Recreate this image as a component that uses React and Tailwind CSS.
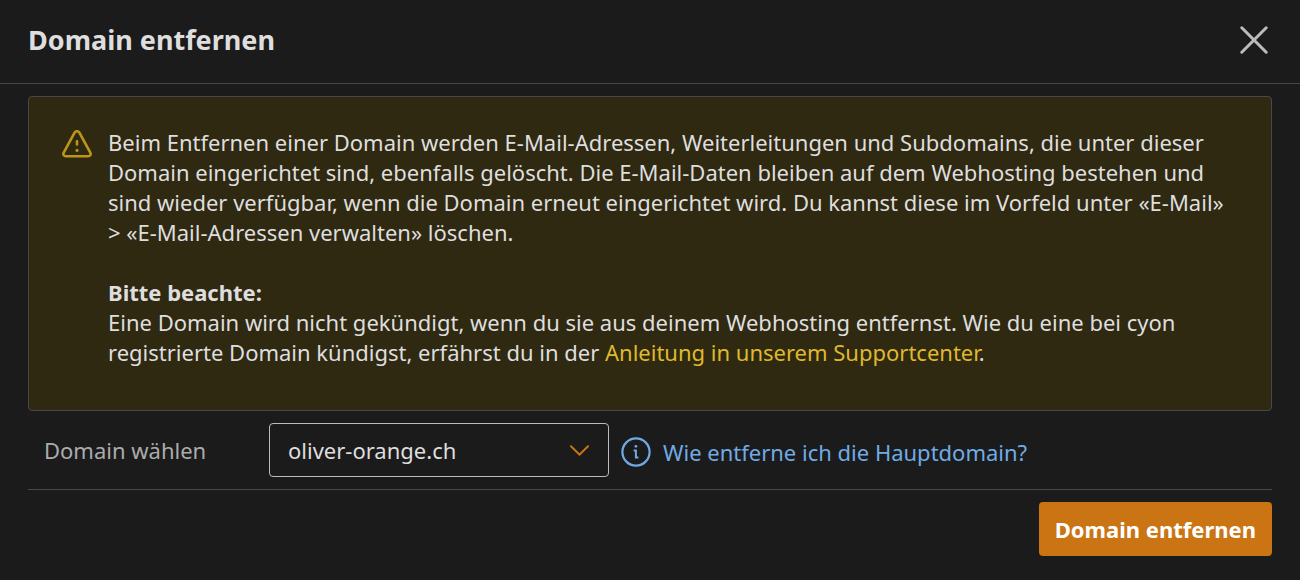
import { useState } from "react";

const domains = ["oliver-orange.ch"];

const WarningIcon = () => (
  <svg
    viewBox="0 0 30 28"
    className="h-7 w-[30px] shrink-0"
    fill="none"
    stroke="currentColor"
    strokeWidth="2.6"
    strokeLinecap="round"
    strokeLinejoin="round"
    aria-hidden="true"
  >
    <path d="M12.6 2.7 1.7 22.6C.7 24.5 1.9 26.3 4 26.3H26c2.1 0 3.3-1.8 2.3-3.7L17.4 2.7c-1.1-2-3.7-2-4.8 0Z" />
    <path d="M15 11.3v3.2" />
    <path d="M15 20.3v.1" strokeWidth="3" />
  </svg>
);

const InfoIcon = () => (
  <svg
    viewBox="0 0 30 30"
    className="size-[30px] shrink-0"
    fill="none"
    stroke="currentColor"
    strokeWidth="2.2"
    aria-hidden="true"
  >
    <circle cx="15" cy="15" r="13.6" />
    <path d="M12.6 13.5h2.3v6.9h2.5" strokeWidth="2" />
    <circle cx="14.9" cy="9.3" r="1.4" fill="currentColor" stroke="none" />
  </svg>
);

const CloseIcon = () => (
  <svg
    viewBox="0 0 28 28"
    className="size-7"
    fill="none"
    stroke="currentColor"
    strokeWidth="3"
    strokeLinecap="round"
    aria-hidden="true"
  >
    <path d="M1.8 1.8 26.2 26.2M26.2 1.8 1.8 26.2" />
  </svg>
);

const ChevronIcon = () => (
  <svg
    viewBox="0 0 20 12"
    className="pointer-events-none absolute top-1/2 right-5 h-3 w-5 -translate-y-1/2 text-[#cb7413]"
    fill="none"
    stroke="currentColor"
    strokeWidth="2"
    strokeLinecap="round"
    aria-hidden="true"
  >
    <path d="M2 2.2 10.5 10.6 19 2.2" />
  </svg>
);

const App = () => {
  const [domain, setDomain] = useState(domains[0]);

  return (
    <div
      role="dialog"
      aria-labelledby="dialog-title"
      className="min-h-screen bg-[#1b1b1b] font-['Noto_Sans',sans-serif] text-[22px] leading-[30px] text-[#dedede]"
    >
      <header className="flex items-center justify-between border-b border-[#484848] px-7 pt-5 pb-[23px]">
        <h1 id="dialog-title" className="text-[27px] leading-10 font-bold">
          Domain entfernen
        </h1>
        <button type="button" aria-label="Schliessen" className="mr-1 text-[#bcbcbc]">
          <CloseIcon />
        </button>
      </header>

      <main className="px-7 pt-3">
        <div className="flex gap-4 rounded border border-[#484848] bg-[#302912] pt-[30px] pr-6 pb-[43px] pl-[33px]">
          <div className="pt-[3px] text-[#bd9519]">
            <WarningIcon />
          </div>
          <div>
            <p>
              Beim Entfernen einer Domain werden E-Mail-Adressen, Weiterleitungen
              und Subdomains, die unter dieser
              <br />
              Domain eingerichtet sind, ebenfalls gelöscht. Die E-Mail-Daten
              bleiben auf dem Webhosting bestehen und
              <br />
              sind wieder verfügbar, wenn die Domain erneut eingerichtet wird. Du
              kannst diese im Vorfeld unter «E-Mail»
              <br />
              &gt; «E-Mail-Adressen verwalten» löschen.
            </p>
            <p className="mt-[30px]">
              <strong>Bitte beachte:</strong>
              <br />
              Eine Domain wird nicht gekündigt, wenn du sie aus deinem Webhosting
              entfernst. Wie du eine bei cyon
              <br />
              registrierte Domain kündigst, erfährst du in der{" "}
              <a href="#anleitung" className="text-[#dfb92c]">
                Anleitung in unserem Supportcenter
              </a>
              .
            </p>
          </div>
        </div>

        <form onSubmit={(e) => e.preventDefault()}>
          <div className="flex items-center border-b border-[#484848] py-3 pl-4">
            <label htmlFor="domain" className="w-[225px] text-[#ababab]">
              Domain wählen
            </label>
            <div className="relative w-[340px]">
              <select
                id="domain"
                value={domain}
                onChange={(e) => setDomain(e.target.value)}
                className="h-[54px] w-full appearance-none rounded border border-[#bcbcbc] bg-[#1b1b1b] px-[18px]"
              >
                {domains.map((name) => (
                  <option key={name}>{name}</option>
                ))}
              </select>
              <ChevronIcon />
            </div>
            <a
              href="#hauptdomain"
              className="ml-3 flex items-center gap-3 pt-1 text-[#70abe6]"
            >
              <InfoIcon />
              Wie entferne ich die Hauptdomain?
            </a>
          </div>

          <div className="flex justify-end py-3">
            <button
              type="submit"
              className="h-[54px] rounded bg-[#cb7413] px-4 font-bold text-white"
            >
              Domain entfernen
            </button>
          </div>
        </form>
      </main>
    </div>
  );
};

export default App;
